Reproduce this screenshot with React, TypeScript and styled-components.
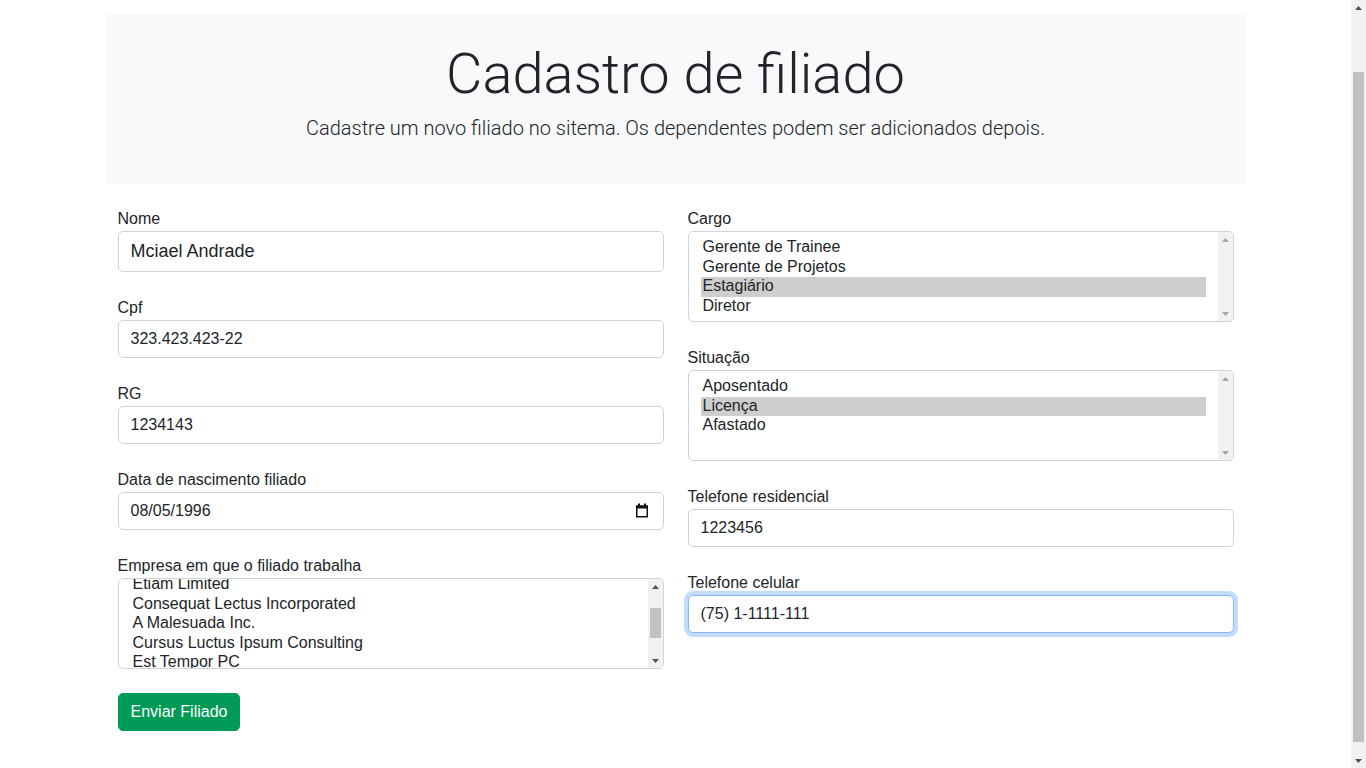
import React, { useLayoutEffect, useRef } from "react";
import styled, { createGlobalStyle, css } from "styled-components";

const GlobalStyle = createGlobalStyle`
  html, body {
    margin: 0;
    padding: 0;
    overflow: hidden;
  }
  body {
    font-family: "Liberation Sans", Arial, sans-serif;
    font-size: 16px;
    line-height: 1.5;
    color: #212529;
    background: #fff;
  }
  * {
    box-sizing: border-box;
  }
`;

/* ---------- shell with page scrollbar ---------- */

const Shell = styled.div`
  display: flex;
  height: 100vh;
  overflow: hidden;
`;

const Main = styled.main`
  flex: 1;
  min-width: 0;
  overflow: hidden;
  padding-top: 14px;
`;

const ScrollRail = styled.div<{ $width: number }>`
  width: ${(p) => p.$width}px;
  flex-shrink: 0;
  display: flex;
  flex-direction: column;
  background: #f1f1f1;
`;

const ArrowButton = styled.div`
  height: 15px;
  flex-shrink: 0;
  display: flex;
  align-items: center;
  justify-content: center;
`;

const Track = styled.div`
  flex: 1;
  display: flex;
  flex-direction: column;
  min-height: 0;
`;

const Thumb = styled.div<{ $offset: number; $size: number }>`
  margin: ${(p) => p.$offset}px 2px 0;
  height: ${(p) => p.$size}px;
  background: #c1c1c1;
`;

type ScrollbarProps = { active: boolean; offset?: number; size?: number };

function Scrollbar({ active, offset, size }: ScrollbarProps) {
  const color = active ? "#505050" : "#a3a3a3";
  return (
    <ScrollRail $width={15}>
      <ArrowButton>
        <svg width="7" height="4" viewBox="0 0 7 4" aria-hidden="true">
          <polygon points="0,4 3.5,0 7,4" fill={color} />
        </svg>
      </ArrowButton>
      <Track>{size ? <Thumb $offset={offset ?? 0} $size={size} /> : null}</Track>
      <ArrowButton>
        <svg width="7" height="4" viewBox="0 0 7 4" aria-hidden="true">
          <polygon points="0,0 3.5,4 7,0" fill={color} />
        </svg>
      </ArrowButton>
    </ScrollRail>
  );
}

/* ---------- page ---------- */

const Container = styled.div`
  width: 1140px;
  margin: 0 auto;
`;

const Hero = styled.header`
  background: #f8f9fa;
  padding: 27px 24px 40px;
  text-align: center;
  margin-bottom: 23px;
`;

const Title = styled.h1`
  font-family: Roboto, "Liberation Sans", sans-serif;
  font-weight: 300;
  font-size: 56px;
  line-height: 1.2;
  margin: 0 0 5px;
  color: #212529;
`;

const Lead = styled.p`
  font-family: Roboto, "Liberation Sans", sans-serif;
  font-weight: 300;
  font-size: 20px;
  line-height: 1.5;
  margin: 0;
  color: #212529;
`;

const Form = styled.form`
  display: grid;
  grid-template-columns: 1fr 1fr;
  column-gap: 24px;
  padding: 0 12px;
  align-items: start;
`;

const Column = styled.div`
  display: flex;
  flex-direction: column;
`;

const Field = styled.div`
  margin-bottom: 23px;
`;

const Label = styled.label`
  display: block;
  padding-top: 1px;
  font-size: 16px;
  line-height: 24px;
`;

const controlBase = css`
  display: block;
  width: 100%;
  border: 1px solid #ced4da;
  border-radius: 5px;
  background: #fff;
  color: #212529;
  font-family: "Liberation Sans", Arial, sans-serif;
  outline: none;
`;

const Input = styled.input<{ $large?: boolean; $focus?: boolean }>`
  ${controlBase};
  height: ${(p) => (p.$large ? "41px" : "38px")};
  padding: 6px 12px;
  font-size: ${(p) => (p.$large ? "18px" : "16px")};
  line-height: 1.5;
  ${(p) =>
    p.$focus &&
    css`
      border-color: #86b7fe;
      box-shadow: 0 0 0 4px rgba(13, 110, 253, 0.25);
    `}
`;

const DateWrap = styled.div`
  position: relative;
`;

const CalendarIcon = styled.svg`
  position: absolute;
  right: 15px;
  top: 11px;
  width: 14px;
  height: 15px;
  pointer-events: none;
`;

/* ---------- list box ---------- */

const ListFrame = styled.div`
  ${controlBase};
  height: 91px;
  display: flex;
  overflow: hidden;
`;

const ListViewport = styled.div`
  flex: 1;
  min-width: 0;
  overflow: hidden;
  padding: 6px 12px;
`;

const ListContent = styled.div`
  padding-bottom: 6px;
`;

const Option = styled.div<{ $selected?: boolean }>`
  font-size: 16px;
  line-height: 18.5px;
  padding: 0 2px 1px;
  white-space: nowrap;
  color: #212529;
  background: ${(p) => (p.$selected ? "#cecece" : "transparent")};
`;

type ListBoxProps = {
  id: string;
  options: string[];
  selected?: string;
  scrollTop?: number;
  thumb?: { offset: number; size: number };
};

function ListBox({ id, options, selected, scrollTop = 0, thumb }: ListBoxProps) {
  const ref = useRef<HTMLDivElement>(null);
  useLayoutEffect(() => {
    if (ref.current) ref.current.scrollTop = scrollTop;
  }, [scrollTop]);
  return (
    <ListFrame id={id} role="listbox" aria-multiselectable="true">
      <ListViewport ref={ref}>
        <ListContent>
          {options.map((o) => (
            <Option key={o} role="option" aria-selected={o === selected} $selected={o === selected}>
              {o}
            </Option>
          ))}
        </ListContent>
      </ListViewport>
      <Scrollbar active={!!thumb} offset={thumb?.offset} size={thumb?.size} />
    </ListFrame>
  );
}

const SubmitButton = styled.button`
  display: inline-block;
  align-self: flex-start;
  height: 38px;
  padding: 6px 12px;
  border: 1px solid #009a57;
  border-radius: 5px;
  background: #009a57;
  color: #fff;
  font-family: "Liberation Sans", Arial, sans-serif;
  font-size: 16px;
  line-height: 1.5;
  margin-top: 1px;
  cursor: pointer;
`;

const cargos = ["Gerente de Trainee", "Gerente de Projetos", "Estagiário", "Diretor"];
const situacoes = ["Aposentado", "Licença", "Afastado"];
const empresas = [
  "Donec Consulting",
  "Orci Adipiscing Limited",
  "Etiam Limited",
  "Consequat Lectus Incorporated",
  "A Malesuada Inc.",
  "Cursus Luctus Ipsum Consulting",
  "Est Tempor PC",
  "Nulla Facilisis LLP",
];

export default function App() {
  return (
    <>
      <GlobalStyle />
      <Shell>
        <Main>
          <Container>
            <Hero>
              <Title>Cadastro de filiado</Title>
              <Lead>Cadastre um novo filiado no sitema. Os dependentes podem ser adicionados depois.</Lead>
            </Hero>
            <Form onSubmit={(e) => e.preventDefault()}>
              <Column>
                <Field>
                  <Label htmlFor="nome">Nome</Label>
                  <Input id="nome" $large defaultValue="Mciael Andrade" />
                </Field>
                <Field>
                  <Label htmlFor="cpf">Cpf</Label>
                  <Input id="cpf" defaultValue="323.423.423-22" />
                </Field>
                <Field>
                  <Label htmlFor="rg">RG</Label>
                  <Input id="rg" defaultValue="1234143" />
                </Field>
                <Field>
                  <Label htmlFor="nasc">Data de nascimento filiado</Label>
                  <DateWrap>
                    <Input id="nasc" defaultValue="08/05/1996" />
                    <CalendarIcon viewBox="0 0 14 15" aria-hidden="true">
                      <rect x="3" y="0.5" width="2" height="3" fill="#111" />
                      <rect x="9" y="0.5" width="2" height="3" fill="#111" />
                      <rect x="1" y="2.5" width="12" height="3" fill="#111" />
                      <rect x="1.75" y="3.25" width="10.5" height="10.5" fill="none" stroke="#111" strokeWidth="1.5" />
                    </CalendarIcon>
                  </DateWrap>
                </Field>
                <Field>
                  <Label htmlFor="empresa">Empresa em que o filiado trabalha</Label>
                  <ListBox id="empresa" options={empresas} scrollTop={49} thumb={{ offset: 14, size: 30 }} />
                </Field>
                <SubmitButton type="submit">Enviar Filiado</SubmitButton>
              </Column>
              <Column>
                <Field>
                  <Label htmlFor="cargo">Cargo</Label>
                  <ListBox id="cargo" options={cargos} selected="Estagiário" />
                </Field>
                <Field>
                  <Label htmlFor="situacao">Situação</Label>
                  <ListBox id="situacao" options={situacoes} selected="Licença" />
                </Field>
                <Field>
                  <Label htmlFor="telres">Telefone residencial</Label>
                  <Input id="telres" defaultValue="1223456" />
                </Field>
                <Field>
                  <Label htmlFor="telcel">Telefone celular</Label>
                  <Input id="telcel" $focus defaultValue="(75) 1-1111-111" />
                </Field>
              </Column>
            </Form>
          </Container>
        </Main>
        <Scrollbar active offset={57} size={670} />
      </Shell>
    </>
  );
}
